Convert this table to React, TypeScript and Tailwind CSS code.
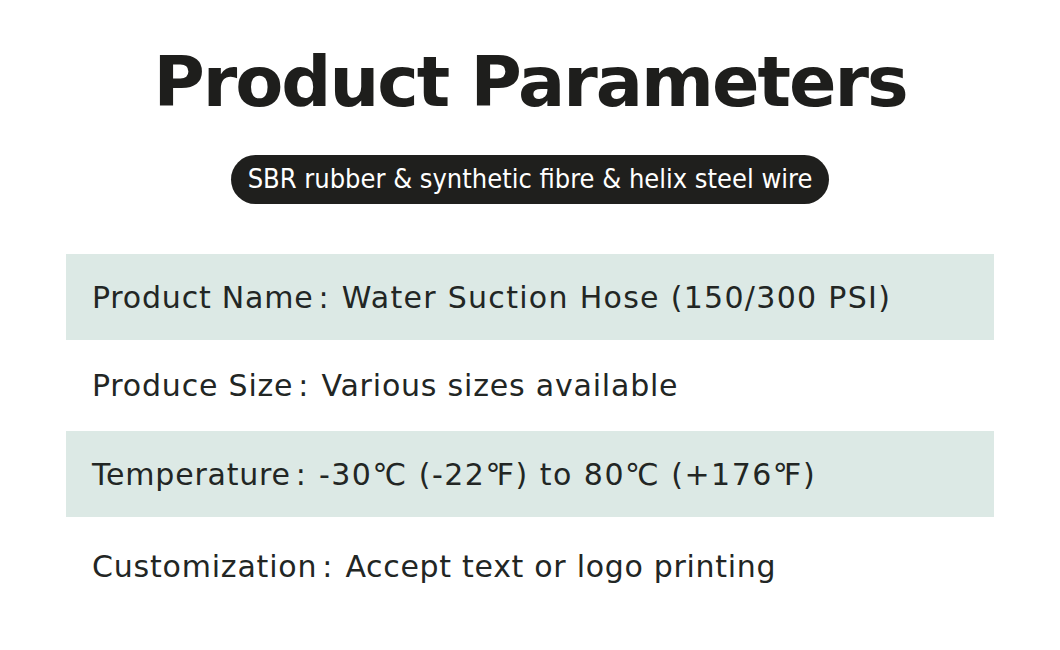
const rows = [
  { label: 'Product Name', value: 'Water Suction Hose (150/300 PSI)', row: 'h-[86px] bg-[#dce9e5]', track: 'tracking-[1.3px]' },
  { label: 'Produce Size', value: 'Various sizes available', row: 'h-[91px]', track: 'tracking-[0.8px]' },
  { label: 'Temperature', value: '-30℃ (-22℉) to 80℃ (+176℉)', row: 'h-[86px] bg-[#dce9e5]', track: 'tracking-[1.5px]' },
  { label: 'Customization', value: 'Accept text or logo printing', row: 'h-[99px]', track: 'tracking-[0.7px]' },
];

export default function App() {
  return (
    <div className="w-[1060px] h-[650px] bg-white flex flex-col items-center text-[#222624] font-['DejaVu_Sans',sans-serif]">
      <h1 className="mt-[40px] text-[70px] leading-[84px] tracking-[-2px] font-bold text-[#1e1e1c]">Product Parameters</h1>
      <div className="mt-[31px] h-[49px] px-[17px] rounded-full bg-[#1f1f1d] text-white flex items-center text-[27px] font-['DejaVu_Sans_Condensed','DejaVu_Sans',sans-serif]">
        SBR rubber &amp; synthetic fibre &amp; helix steel wire
      </div>
      <div className="mt-[50px] w-[928px] flex flex-col">
        {rows.map((r, i) => (
          <div key={i} className={`${r.row} flex items-center pl-[26px] text-[30px]`}>
            <span className="tracking-[0.8px]">{r.label}</span>
            <span className="ml-[5px] mr-[13px]">:</span>
            <span className={r.track}>{r.value}</span>
          </div>
        ))}
      </div>
    </div>
  );
}
